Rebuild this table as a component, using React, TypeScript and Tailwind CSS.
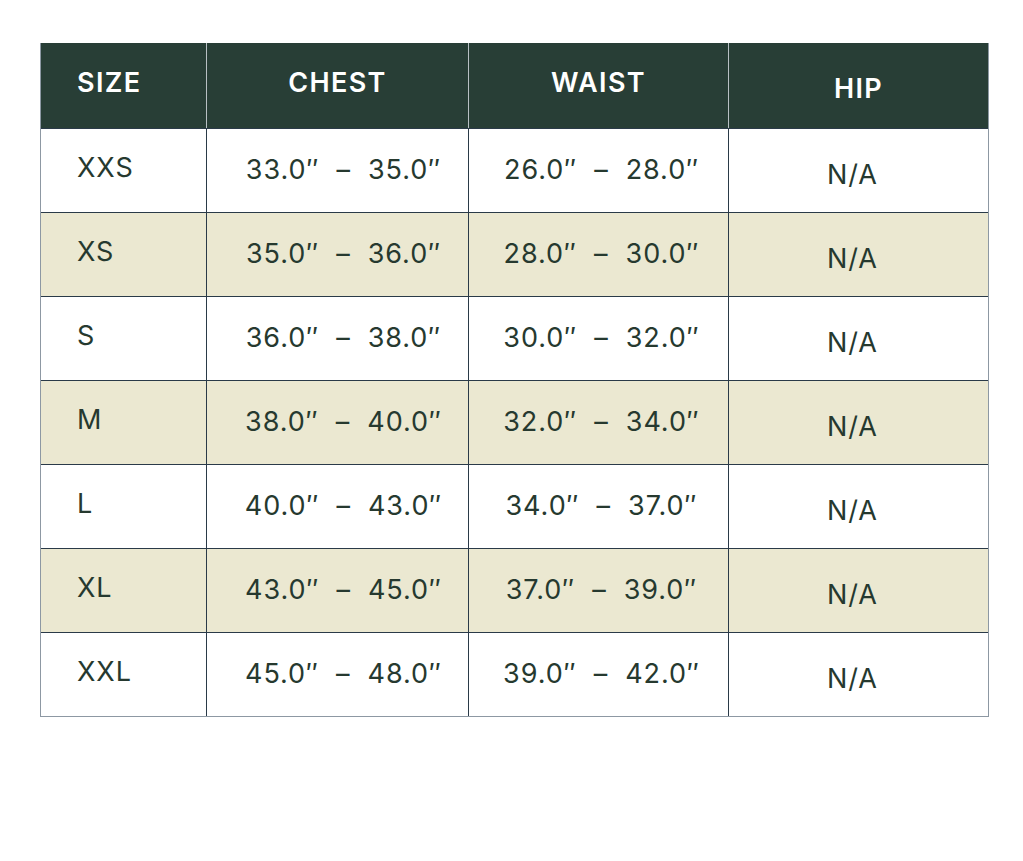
import React from "react";

const rows = [
  { size: "XXS", chest: "33.0″ – 35.0″", waist: "26.0″ – 28.0″", hip: "N/A" },
  { size: "XS", chest: "35.0″ – 36.0″", waist: "28.0″ – 30.0″", hip: "N/A" },
  { size: "S", chest: "36.0″ – 38.0″", waist: "30.0″ – 32.0″", hip: "N/A" },
  { size: "M", chest: "38.0″ – 40.0″", waist: "32.0″ – 34.0″", hip: "N/A" },
  { size: "L", chest: "40.0″ – 43.0″", waist: "34.0″ – 37.0″", hip: "N/A" },
  { size: "XL", chest: "43.0″ – 45.0″", waist: "37.0″ – 39.0″", hip: "N/A" },
  { size: "XXL", chest: "45.0″ – 48.0″", waist: "39.0″ – 42.0″", hip: "N/A" },
];

export default function App() {
  return (
    <div className="min-h-screen bg-white pt-[43px] pl-[40px] font-['Inter',sans-serif]">
      <div className="w-[949px] border-x border-b border-[#8d98a3]">
        {/* header */}
        <div className="flex h-[85px] bg-[#283e36] text-[27px] font-semibold tracking-[0.05em] text-white">
          <div className="w-[165px] pl-[36px] pt-[20px]">SIZE</div>
          <div className="w-[262px] border-l border-[#b8c0c4] pt-[20px] text-center">CHEST</div>
          <div className="w-[260px] border-l border-[#b8c0c4] pt-[20px] text-center">WAIST</div>
          <div className="flex-1 border-l border-[#b8c0c4] pt-[26px] text-center">HIP</div>
        </div>
        {rows.map((r, i) => (
          <div
            key={r.size}
            className={
              "flex h-[84px] border-t border-[#2a3a48] text-[27px] tracking-[0.035em] text-[#26392f] " +
              (i % 2 === 1 ? "bg-[#ebe8d1]" : "bg-white")
            }
          >
            <div className="w-[165px] pl-[36px] pt-[19px]">{r.size}</div>
            <div className="w-[262px] border-l border-[#2a3a48] pt-[21px] pl-[12px] text-center whitespace-pre">{r.chest.replace(" – ", "  –  ")}</div>
            <div className="w-[260px] border-l border-[#2a3a48] pt-[21px] pl-[6px] text-center whitespace-pre">{r.waist.replace(" – ", "  –  ")}</div>
            <div className="flex-1 border-l border-[#2a3a48] pt-[26px] pr-[12px] text-center">{r.hip}</div>
          </div>
        ))}
      </div>
    </div>
  );
}
